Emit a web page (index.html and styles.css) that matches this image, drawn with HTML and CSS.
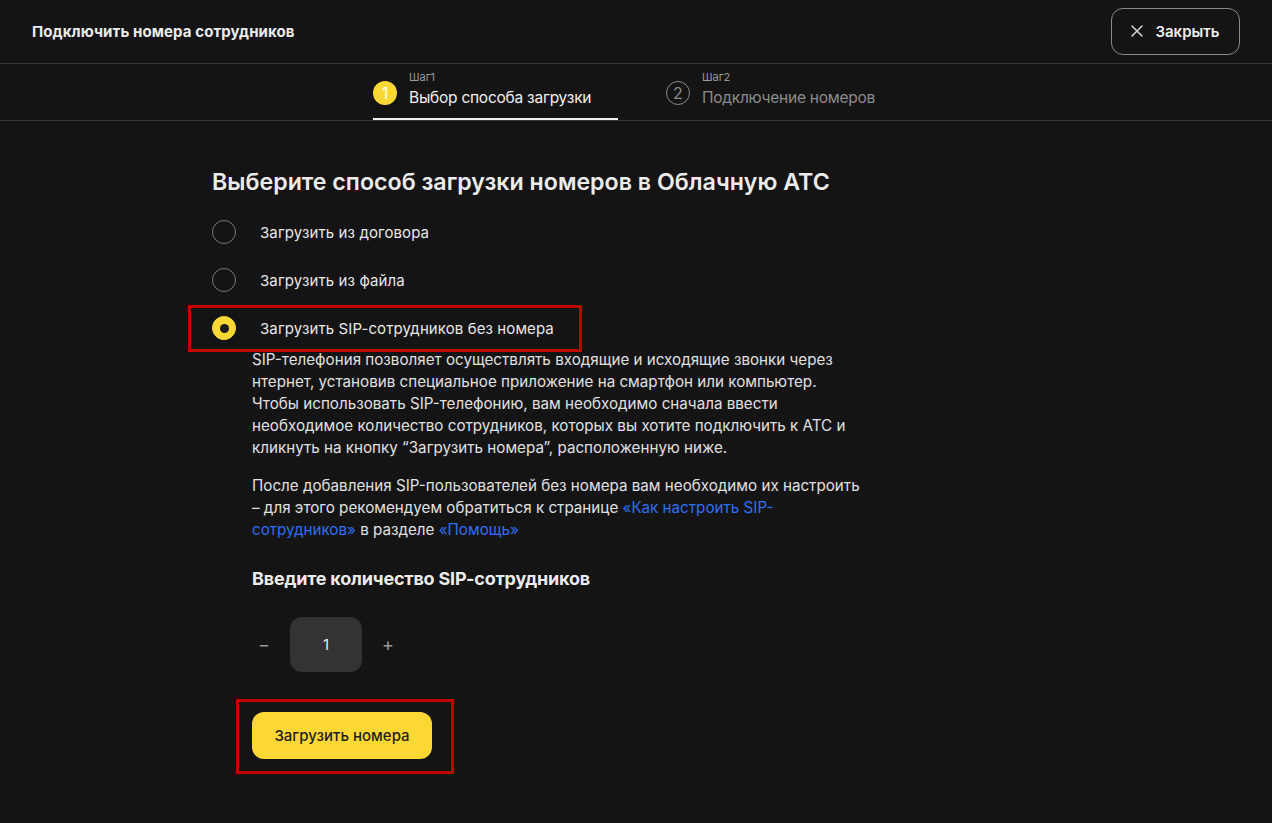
FILE: index.html
```html
<!DOCTYPE html>
<html lang="ru">
<head>
<meta charset="utf-8">
<title>Подключить номера сотрудников</title>
<link rel="stylesheet" href="styles.css">
</head>
<body>
<header class="topbar">
  <div class="title">Подключить номера сотрудников</div>
  <button class="close-btn" type="button">
    <svg class="close-icon" width="12" height="12" viewBox="0 0 12 12"><path d="M1 1L11 11M11 1L1 11" stroke="#d8d8d8" stroke-width="1.5" stroke-linecap="round"/></svg>
    <span>Закрыть</span>
  </button>
</header>

<nav class="steps">
  <div class="step step-active">
    <div class="step-num num-active">1</div>
    <div class="step-text">
      <div class="step-small">Шаг1</div>
      <div class="step-label">Выбор способа загрузки</div>
    </div>
  </div>
  <div class="step">
    <div class="step-num num-idle">2</div>
    <div class="step-text">
      <div class="step-small">Шаг2</div>
      <div class="step-label label-idle">Подключение номеров</div>
    </div>
  </div>
</nav>

<main class="content">
  <h1 class="heading">Выберите способ загрузки номеров в Облачную АТС</h1>

  <div class="options">
    <label class="option"><span class="radio"></span><span>Загрузить из договора</span></label>
    <label class="option"><span class="radio"></span><span>Загрузить из файла</span></label>
    <label class="option option-selected"><span class="radio radio-on"><span class="dot"></span></span><span>Загрузить SIP-сотрудников без номера</span><span class="mark mark-option"></span></label>
  </div>

  <div class="details">
    <p class="para">SIP-телефония позволяет осуществлять входящие и исходящие звонки через<br>нтернет, установив специальное приложение на смартфон или компьютер.<br>Чтобы использовать SIP-телефонию, вам необходимо сначала ввести<br>необходимое количество сотрудников, которых вы хотите подключить к АТС и<br>кликнуть на кнопку “Загрузить номера”, расположенную ниже.</p>
    <p class="para para2">После добавления SIP-пользователей без номера вам необходимо их настроить<br>– для этого рекомендуем обратиться к странице <a class="link" href="#">«Как настроить SIP-<br>сотрудников»</a> в разделе <a class="link" href="#">«Помощь»</a></p>

    <h2 class="subheading">Введите количество SIP-сотрудников</h2>

    <div class="counter">
      <span class="ctrl">−</span>
      <div class="count-box">1</div>
      <span class="ctrl">+</span>
    </div>

    <div class="submit-wrap">
      <button class="submit" type="button">Загрузить номера</button>
      <span class="mark mark-button"></span>
    </div>
  </div>
</main>
</body>
</html>
```

FILE: styles.css
```css
* { box-sizing: border-box; }

html, body {
  margin: 0;
  padding: 0;
  background: #141414;
  color: #e8e8e8;
  font-family: Inter, "Noto Sans", "Liberation Sans", sans-serif;
}

body { width: 1272px; min-height: 823px; }

.topbar {
  height: 64px;
  padding: 0 32px;
  display: flex;
  align-items: center;
  justify-content: space-between;
  border-bottom: 1px solid #3a3a3a;
}

.title {
  font-size: 15px;
  font-weight: 700;
  color: #ececec;
  letter-spacing: 0.1px;
}

.close-btn {
  height: 47px;
  width: 129px;
  margin-top: -1px;
  background: transparent;
  border: 1px solid #8a8a8a;
  border-radius: 12px;
  color: #f0f0f0;
  font-family: inherit;
  font-size: 15px;
  font-weight: 600;
  display: flex;
  align-items: center;
  justify-content: center;
  gap: 12px;
  padding: 0;
}

.steps {
  height: 57px;
  border-bottom: 1px solid #3a3a3a;
  display: flex;
  align-items: stretch;
  padding-left: 373px;
  gap: 48px;
}

.step {
  display: flex;
  align-items: center;
  gap: 12px;
  padding-bottom: 3px;
}

.step-active {
  width: 245px;
  border-bottom: 2px solid #f0f0f0;
  padding-bottom: 1px;
}

.step-num {
  width: 24px;
  height: 24px;
  border-radius: 50%;
  display: flex;
  align-items: center;
  justify-content: center;
  font-size: 16px;
  flex-shrink: 0;
  margin-top: 4px;
}

.num-active {
  background: #fdd835;
  color: #ffffff;
}

.num-idle {
  border: 1.5px solid #8a8a8a;
  color: #8a8a8a;
}

.step-text {
  display: flex;
  flex-direction: column;
  margin-top: -2px;
}

.step-small {
  font-size: 11px;
  color: #9a9a9a;
  line-height: 14px;
  margin-bottom: 3px;
}

.step-label {
  font-size: 15.5px;
  color: #f0f0f0;
  line-height: 22px;
  letter-spacing: -0.25px;
}

.label-idle { color: #8c8c8c; }

.content {
  padding: 46px 0 0 212px;
}

.heading {
  margin: 0;
  font-size: 23.2px;
  font-weight: 600;
  line-height: 30px;
  color: #ececec;
  letter-spacing: 0;
}

.options {
  margin-top: 23px;
  display: flex;
  flex-direction: column;
  gap: 24px;
}

.option {
  position: relative;
  display: flex;
  align-items: center;
  gap: 24px;
  height: 24px;
  font-size: 15px;
  color: #e8e8e8;
  letter-spacing: 0.1px;
}

.radio {
  width: 24px;
  height: 24px;
  border-radius: 50%;
  border: 1.5px solid #7a7a7a;
  display: flex;
  align-items: center;
  justify-content: center;
}

.radio-on {
  background: #fdd835;
  border-color: #fdd835;
}

.dot {
  width: 9px;
  height: 9px;
  border-radius: 50%;
  background: #1a1a1a;
}

.mark {
  position: absolute;
  border: 3px solid #c40000;
  pointer-events: none;
}

.mark-option {
  left: -24px;
  top: -11px;
  width: 394px;
  height: 47px;
}

.details {
  padding-left: 40px;
  margin-top: 9px;
  width: 680px;
}

.para {
  margin: 0;
  font-size: 15.2px;
  line-height: 22px;
  color: #e0e0e0;
  letter-spacing: 0;
  white-space: nowrap;
}

.para2 { margin-top: 16px; }

.link {
  color: #2f6fee;
  text-decoration: none;
}

.subheading {
  margin: 26px 0 0 0;
  font-size: 18px;
  font-weight: 700;
  line-height: 24px;
  color: #ececec;
  letter-spacing: -0.2px;
}

.counter {
  margin-top: 26px;
  display: flex;
  align-items: center;
}

.ctrl {
  width: 26px;
  text-align: left;
  padding-left: 6px;
  color: #9a9a9a;
  font-size: 18px;
  line-height: 20px;
}

.ctrl:last-child { padding-left: 20px; width: 40px; }

.count-box {
  width: 72px;
  height: 55px;
  background: #333333;
  border-radius: 12px;
  display: flex;
  align-items: center;
  justify-content: center;
  font-size: 15px;
  color: #e8e8e8;
  margin-left: 12px;
}

.submit-wrap {
  position: relative;
  margin-top: 40px;
  width: 180px;
}

.submit {
  width: 180px;
  height: 47px;
  background: #fdd835;
  border: none;
  border-radius: 12px;
  font-family: inherit;
  font-size: 15px;
  font-weight: 500;
  color: #1e1e1e;
  padding: 0;
}

.mark-button {
  left: -16px;
  top: -13px;
  width: 218px;
  height: 75px;
}
```
